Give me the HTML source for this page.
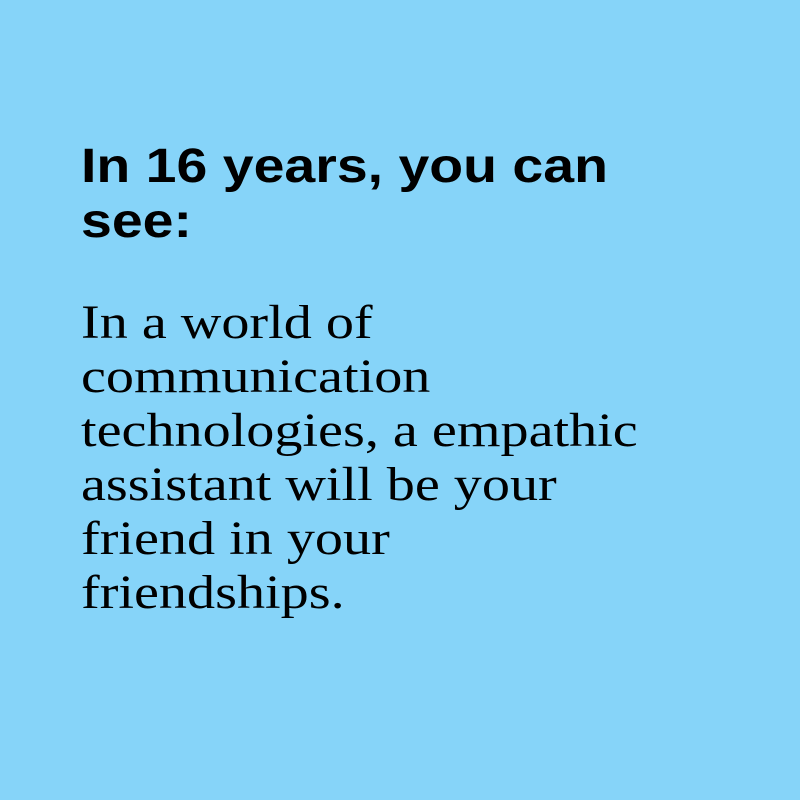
<!DOCTYPE html>
<html><head><meta charset="utf-8"><style>
html,body{margin:0;padding:0;}
body{width:800px;height:800px;background:#86D4F9;position:relative;overflow:hidden;}
h1{position:absolute;left:81px;top:139px;margin:0;font:bold 48px/55px "Liberation Sans",sans-serif;color:#000;white-space:nowrap;transform:scaleX(1.155);transform-origin:0 0;}
p{position:absolute;left:81px;top:296px;margin:0;font:48px/54px "Liberation Serif",serif;color:#000;white-space:nowrap;transform:scaleX(1.17);transform-origin:0 0;}
</style></head><body>
<h1>In 16 years, you can<br>see:</h1>
<p>In a world of<br>communication<br>technologies, a empathic<br>assistant will be your<br>friend in your<br>friendships.</p>
</body></html>
